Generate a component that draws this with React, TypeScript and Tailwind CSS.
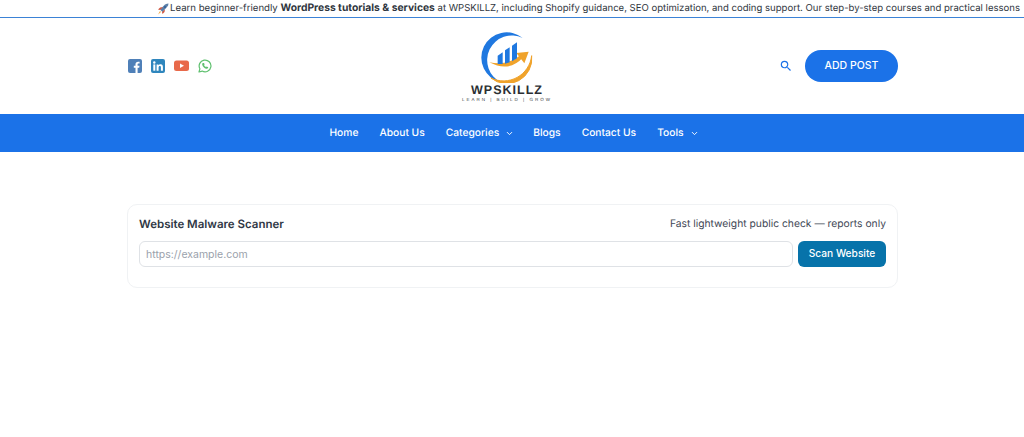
import React from "react";
import { ChevronDown } from "lucide-react";

const Rocket = () => (
  <svg width="12" height="12" viewBox="0 0 12 12" className="shrink-0 mr-[1px]">
    <path d="M3 6.500 L8 1.500 Q10 .5 11.500 .5 Q11.500 2.500 10 4 L5.500 9 Z" fill="#5b7fa8" />
    <circle cx="8" cy="4" r="1" fill="#2f5f9a" />
    <path d="M3.200 4.500 L6 4 L3 7 L1 6.500 Z" fill="#d0553f" />
    <path d="M8 6.500 L7.500 9 L5.500 11 L5 9 Z" fill="#d0553f" />
    <path d="M3 8 L4 9 L1 11.500 Z" fill="#f2a33a" />
  </svg>
);

const Facebook = () => (
  <svg width="14" height="14" viewBox="0 0 14 14">
    <rect width="14" height="14" rx="2" fill="#4f80b8" />
    <path d="M9.600 14V8.800h1.600l.3-2H9.600V5.600c0-.6.2-1 1-1h1V2.800c-.3 0-.9-.1-1.500-.1-1.600 0-2.600 1-2.600 2.600v1.500H5.800v2h1.700V14z" fill="#fff" />
  </svg>
);
const Linkedin = () => (
  <svg width="14" height="14" viewBox="0 0 14 14">
    <rect width="14" height="14" rx="2" fill="#2f86bd" />
    <rect x="2.300" y="5.400" width="2" height="6.300" fill="#fff" />
    <circle cx="3.300" cy="3.500" r="1.200" fill="#fff" />
    <path d="M5.600 5.400h1.900v.9c.4-.6 1.100-1.100 2.100-1.100 1.800 0 2.300 1.100 2.300 2.800v3.700h-2V8.400c0-.8-.2-1.400-1-1.400-.9 0-1.300.6-1.300 1.500v3.200h-2z" fill="#fff" />
  </svg>
);
const Youtube = () => (
  <svg width="15" height="12" viewBox="0 0 15 12">
    <rect y=".5" width="15" height="10.500" rx="2.500" fill="#e8694a" />
    <path d="M6 3.500 L10 5.700 L6 8 Z" fill="#fff" />
  </svg>
);
const Whatsapp = () => (
  <svg width="14" height="14" viewBox="0 0 14 14" fill="none">
    <path d="M1 13 L1.900 9.800 A5.900 5.900 0 1 1 4.200 12.100 Z" stroke="#5fc06f" strokeWidth="1.200" strokeLinejoin="round" />
    <path d="M4.900 3.900c-.6.400-.9 1.100-.6 2 .5 1.700 2 3.200 3.800 3.800.9.300 1.600-.1 2-.7l.1-.8-1.500-.8-.7.7c-.9-.4-1.600-1.100-2-2l.7-.7-.7-1.500z" fill="#5fc06f" />
  </svg>
);

const Logo = () => (
  <div className="flex flex-col items-center w-[92px]">
    <svg width="52" height="54" viewBox="120 28 156 162" className="mb-[2px]">
      <path d="M245 55 A76 76 0 1 0 180 188 A65 65 0 1 1 245 55 Z" fill="#1f78e0" />
      <path d="M150 175 A75 75 0 0 0 272 108 A85 85 0 0 1 150 175 Z" fill="#f0a32b" stroke="#f0a32b" strokeWidth="3" />
      <path d="M145 128 Q200 140 240 105 L247 112 Q205 160 145 128 Z" fill="#f0a32b" />
      <path d="M226 100 L263 96 L250 131 Z" fill="#f0a32b" />
      <path d="M170 108 L185 98 V133 H170 Z" fill="#1f78e0" />
      <path d="M192 92 L206 83 V128 L192 132 Z" fill="#1f78e0" />
      <path d="M213 78 L228 68 V116 L213 125 Z" fill="#1f78e0" />
    </svg>
    <div className="font-['Liberation_Sans',sans-serif] font-bold text-[12.500px] leading-[11px] tracking-[1px] text-[#2b2f33]">WPSKILLZ</div>
    <div className="font-['Liberation_Sans',sans-serif] text-[4.500px] leading-[7px] tracking-[2px] text-[#3a3e42] whitespace-nowrap">LEARN | BUILD | GROW</div>
  </div>
);

const NavItem = ({ label, caret }: { label: string; caret?: boolean }) => (
  <div className="flex items-center gap-[6px] text-[10.250px] font-medium text-white">
    <span>{label}</span>
    {caret && <ChevronDown size={9} strokeWidth={2.500} className="text-white -mr-[2px]" />}
  </div>
);

export default function App() {
  return (
    <div className="w-[1024px] h-[437px] overflow-hidden bg-white font-['Inter',sans-serif] text-[#3a4250] [text-rendering:geometricPrecision]">
      <div className="h-[18px] border-b border-[#3b82d6] overflow-hidden flex items-center pl-[157px] text-[9.650px] leading-[17px] text-[#2f3640] whitespace-nowrap">
        <Rocket />
        <span>Learn beginner-friendly&nbsp;</span>
        <b className="font-bold text-[10.300px]">WordPress tutorials &amp; services</b>
        <span className="text-[9.550px]">&nbsp;at WPSKILLZ, including Shopify guidance, SEO optimization, and coding support. Our step-by-step courses and practical lessons</span>
      </div>

      <header className="h-[96px] flex items-center justify-between pl-[128px] pr-[126px]">
        <div className="flex items-center gap-[9px] w-[228px]">
          <Facebook />
          <Linkedin />
          <Youtube />
          <Whatsapp />
        </div>
        <Logo />
        <div className="flex items-center justify-end gap-[12px] w-[240px]">
          <svg width="14" height="14" viewBox="0 0 24 24" fill="#1b72e8">
            <path d="M15.500 14h-.79l-.28-.27A6.471 6.471 0 0 0 16 9.500 6.500 6.500 0 1 0 9.500 16c1.610 0 3.090-.59 4.230-1.570l.27.28v.79l5 4.990L20.490 19l-4.990-5zm-6 0C7.010 14 5 11.990 5 9.500S7.010 5 9.500 5 14 7.010 14 9.500 11.990 14 9.500 14z" />
          </svg>
          <button className="w-[93px] h-[32px] rounded-full bg-[#1b72e8] text-white text-[10.500px] font-medium">ADD POST</button>
        </div>
      </header>

      <nav className="h-[38px] bg-[#1b72e8] flex items-center justify-center gap-[21px] pl-[2px] pt-[1px]">
        <NavItem label="Home" />
        <NavItem label="About Us" />
        <NavItem label="Categories" caret />
        <NavItem label="Blogs" />
        <NavItem label="Contact Us" />
        <NavItem label="Tools" caret />
      </nav>

      <main className="pt-[52px] pl-[127px] pr-[126px]">
        <section className="h-[84px] rounded-[10px] border border-[#f0f2f4] bg-white px-[11px] pt-[10px]">
          <div className="flex items-center justify-between h-[20px]">
            <h2 className="text-[11.500px] font-semibold text-[#2f3845]">Website Malware Scanner</h2>
            <span className="text-[10.300px] text-[#3f4856]">Fast lightweight public check — reports only</span>
          </div>
          <div className="flex gap-[5px] mt-[6px]">
            <input
              readOnly
              placeholder="https://example.com"
              className="flex-1 h-[26px] rounded-[6px] border border-[#dfe2e6] px-[6px] text-[10.500px] bg-white outline-none placeholder:text-[#9aa1ab]"
            />
            <button className="w-[88px] h-[26px] rounded-[6px] bg-[#0773aa] text-white text-[10.200px] font-medium">Scan Website</button>
          </div>
        </section>
      </main>
    </div>
  );
}
